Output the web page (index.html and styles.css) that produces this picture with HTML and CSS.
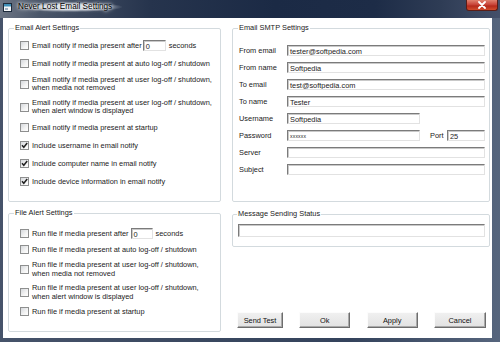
FILE: index.html
```html
<!DOCTYPE html>
<html lang="en">

<head>
    <meta charset="UTF-8">
    <title>Never Lost Email Settings</title>
    <link rel="stylesheet" href="styles.css">
</head>

<body>
    <div class="window">
        <div class="titlebar">
            <svg class="app-icon" width="9" height="9" viewBox="0 0 9 9">
                <rect x="0.5" y="0.5" width="8" height="8" fill="#f4f6f8" stroke="#1d2b3c"/>
                <rect x="1" y="1" width="7" height="2.5" fill="#3f8fb8"/>
                <rect x="2" y="5" width="3" height="2" fill="#9fb2c4"/>
            </svg>
            <span class="title">Never Lost Email Settings</span>
            <button class="close">
                <svg width="10" height="8" viewBox="0 0 10 8">
                    <path d="M2 1 L8 7 M8 1 L2 7" stroke="#fff" stroke-width="1.8" stroke-linecap="round"/>
                </svg>
            </button>
        </div>

        <div class="client">
            <div class="col">
                <!-- Email alerts -->
                <fieldset class="group email-alert">
                    <legend>Email Alert Settings</legend>
                    <div class="rows">
                        <label class="row"><span class="cb"></span><span>Email notify if media present after</span><span class="field num">0</span><span class="unit">seconds</span></label>
                        <label class="row"><span class="cb"></span><span>Email notify if media present at auto log-off / shutdown</span></label>
                        <label class="row"><span class="cb"></span><span>Email notify if media present at user log-off / shutdown,<br>when media not removed</span></label>
                        <label class="row"><span class="cb"></span><span>Email notify if media present at user log-off / shutdown,<br>when alert window is displayed</span></label>
                        <label class="row"><span class="cb"></span><span>Email notify if media present at startup</span></label>
                        <label class="row"><span class="cb on"><svg width="7" height="7" viewBox="0 0 7 7"><path d="M1 3.2 L2.8 5.3 L6.2 1" fill="none" stroke="#222" stroke-width="1.5"/></svg></span><span>Include username in email notify</span></label>
                        <label class="row"><span class="cb on"><svg width="7" height="7" viewBox="0 0 7 7"><path d="M1 3.2 L2.8 5.3 L6.2 1" fill="none" stroke="#222" stroke-width="1.5"/></svg></span><span>Include computer name in email notify</span></label>
                        <label class="row"><span class="cb on"><svg width="7" height="7" viewBox="0 0 7 7"><path d="M1 3.2 L2.8 5.3 L6.2 1" fill="none" stroke="#222" stroke-width="1.5"/></svg></span><span>Include device information in email notify</span></label>
                    </div>
                </fieldset>

                <!-- File alerts -->
                <fieldset class="group file-alert">
                    <legend>File Alert Settings</legend>
                    <div class="rows">
                        <label class="row"><span class="cb"></span><span>Run file if media present after</span><span class="field num">0</span><span class="unit">seconds</span></label>
                        <label class="row"><span class="cb"></span><span>Run file if media present at auto log-off / shutdown</span></label>
                        <label class="row"><span class="cb"></span><span>Run file if media present at user log-off / shutdown,<br>when media not removed</span></label>
                        <label class="row"><span class="cb"></span><span>Run file if media present at user log-off / shutdown,<br>when alert window is displayed</span></label>
                        <label class="row"><span class="cb"></span><span>Run file if media present at startup</span></label>
                    </div>
                </fieldset>
            </div>

            <div class="col">
                <!-- SMTP -->
                <fieldset class="group smtp">
                    <legend>Email SMTP Settings</legend>
                    <div class="form">
                        <span class="lbl">From email</span><span class="field">tester@softpedia.com</span>
                        <span class="lbl">From name</span><span class="field">Softpedia</span>
                        <span class="lbl">To email</span><span class="field">test@softpedia.com</span>
                        <span class="lbl">To name</span><span class="field">Tester</span>
                        <span class="lbl">Username</span><span class="field short">Softpedia</span>
                        <span class="lbl">Password</span>
                        <span class="pw-line"><span class="field short pw">xxxxxx</span><span class="port">Port</span><span class="field port-in">25</span></span>
                        <span class="lbl">Server</span><span class="field"></span>
                        <span class="lbl">Subject</span><span class="field"></span>
                    </div>
                </fieldset>

                <fieldset class="group status">
                    <legend>Message Sending Status</legend>
                    <span class="field status-box"></span>
                </fieldset>

                <div class="buttons">
                    <button class="btn send">Send Test</button>
                    <button class="btn">Ok</button>
                    <button class="btn">Apply</button>
                    <button class="btn cancel">Cancel</button>
                </div>
            </div>
        </div>
    </div>
</body>

</html>
```

FILE: styles.css
```css
* {
    box-sizing: border-box;
}

body {
    margin: 0;
    width: 500px;
    height: 342px;
    overflow: hidden;
    font-family: "Liberation Sans", Arial, sans-serif;
    font-size: 7.4px;
    color: #1a1a1a;
}

.window {
    width: 500px;
    height: 342px;
    padding: 0 8px 4px 3px;
    background: linear-gradient(90deg, #46536a 0%, #3a4860 40%, #34435c 70%, #56657d 100%);
    display: flex;
    flex-direction: column;
}

/* title bar */
.titlebar {
    height: 18px;
    margin: 0 -8px 0 -3px;
    padding-left: 3px;
    display: flex;
    align-items: flex-start;
    background: linear-gradient(90deg, #6c7584 0%, #4a5669 8%, #26344d 30%, #1b2a45 55%, #1d2c47 75%, #2e3c55 88%, #44506a 100%);
}

.app-icon {
    margin-top: 3px;
    flex: none;
}

.title {
    margin: 2px 0 0 5px;
    font-family: "Liberation Sans", Arial, sans-serif;
    font-size: 8.2px;
    line-height: 10px;
    color: #000;
    padding: 0 10px 0 1px;
    background: radial-gradient(ellipse at center, rgba(235, 240, 246, 0.85) 35%, rgba(235, 240, 246, 0) 72%);
    text-shadow: 0 0 3px #fff, 0 0 5px #fff;
}

.close {
    margin-left: auto;
    margin-right: 2px;
    width: 32px;
    height: 11px;
    padding: 0;
    border: 1px solid #5b1d16;
    border-top: none;
    border-radius: 0 0 3px 3px;
    background: linear-gradient(#e0826f 0%, #c9463a 45%, #b52a1c 60%, #d14c2c 100%);
    display: flex;
    align-items: center;
    justify-content: center;
}

/* dialog body */
.client {
    flex: 1;
    background: #fff;
    display: grid;
    grid-template-columns: 213px 258px;
    column-gap: 11px;
    padding: 6px 2px 6px 5px;
}

.col {
    display: flex;
    flex-direction: column;
    min-height: 0;
}

.group {
    margin: 0;
    min-width: 0;
    border: 1px solid #d3dade;
    border-radius: 2px;
    padding: 8px 4px 14px 6px;
}

.group legend {
    padding: 0 1px;
    margin-left: -1px;
    line-height: 8px;
    font-size: 7.4px;
}

.rows {
    display: flex;
    flex-direction: column;
    gap: 7px;
}

.row {
    display: flex;
    align-items: center;
    min-height: 11px;
    line-height: 8px;
    white-space: nowrap;
}

.cb {
    flex: none;
    width: 9px;
    height: 9px;
    margin: 0 3px 0 5px;
    border: 1px solid #8e8f8f;
    background: linear-gradient(135deg, #d6d9dd 0%, #f4f4f4 60%, #fff 100%);
    display: flex;
    align-items: center;
    justify-content: center;
}

.field {
    display: block;
    height: 11px;
    padding: 1px 2px 0;
    line-height: 9px;
    background: #fff;
    border: 1px solid;
    border-color: #7b7b7b #e2e2e2 #e2e2e2 #7b7b7b;
    box-shadow: inset 1px 1px 0 #c9c9c9;
    white-space: nowrap;
    overflow: hidden;
}

.row .num {
    width: 23px;
    flex: none;
    margin-left: 1px;
}

.unit {
    margin-left: 3px;
}

.file-alert {
    flex: 1;
    margin-top: 7px;
    padding-top: 11px;
}

.file-alert .rows {
    gap: 5px;
}

.file-alert .row {
    line-height: 9px;
}

.file-alert .num {
    width: 22px;
    margin-left: 2px;
}

/* smtp form */
.smtp {
    padding: 13px 4px 26px 6px;
}

.form {
    display: grid;
    grid-template-columns: 48px 198px;
    row-gap: 6px;
    align-items: center;
}

.lbl {
    line-height: 11px;
}

.field.short {
    width: 133px;
}

.pw-line {
    display: flex;
    align-items: center;
}

.pw {
    font-size: 5px;
    letter-spacing: 0.2px;
}

.port {
    margin-left: 10px;
    width: 17px;
}

.port-in {
    width: 38px;
}

.status {
    margin-top: 8px;
    padding: 6px 4px 9px 5px;
}

.status-box {
    height: 13px;
    width: 247px;
}

/* buttons */
.buttons {
    margin-top: auto;
    margin-bottom: 4px;
    padding: 0 4px 0 5px;
    display: flex;
    justify-content: space-between;
}

.btn {
    height: 16px;
    width: 51px;
    padding: 0;
    font-family: "Liberation Sans", Arial, sans-serif;
    font-size: 7.4px;
    color: #111;
    background: linear-gradient(#f0f0f0, #e2e2e2);
    border: 1px solid;
    border-color: #fcfcfc #6d6d6d #6d6d6d #fcfcfc;
    box-shadow: inset -1px -1px 0 #a9a9a9;
}

.btn.send {
    width: 46px;
}

.btn.cancel {
    width: 52px;
}
```
